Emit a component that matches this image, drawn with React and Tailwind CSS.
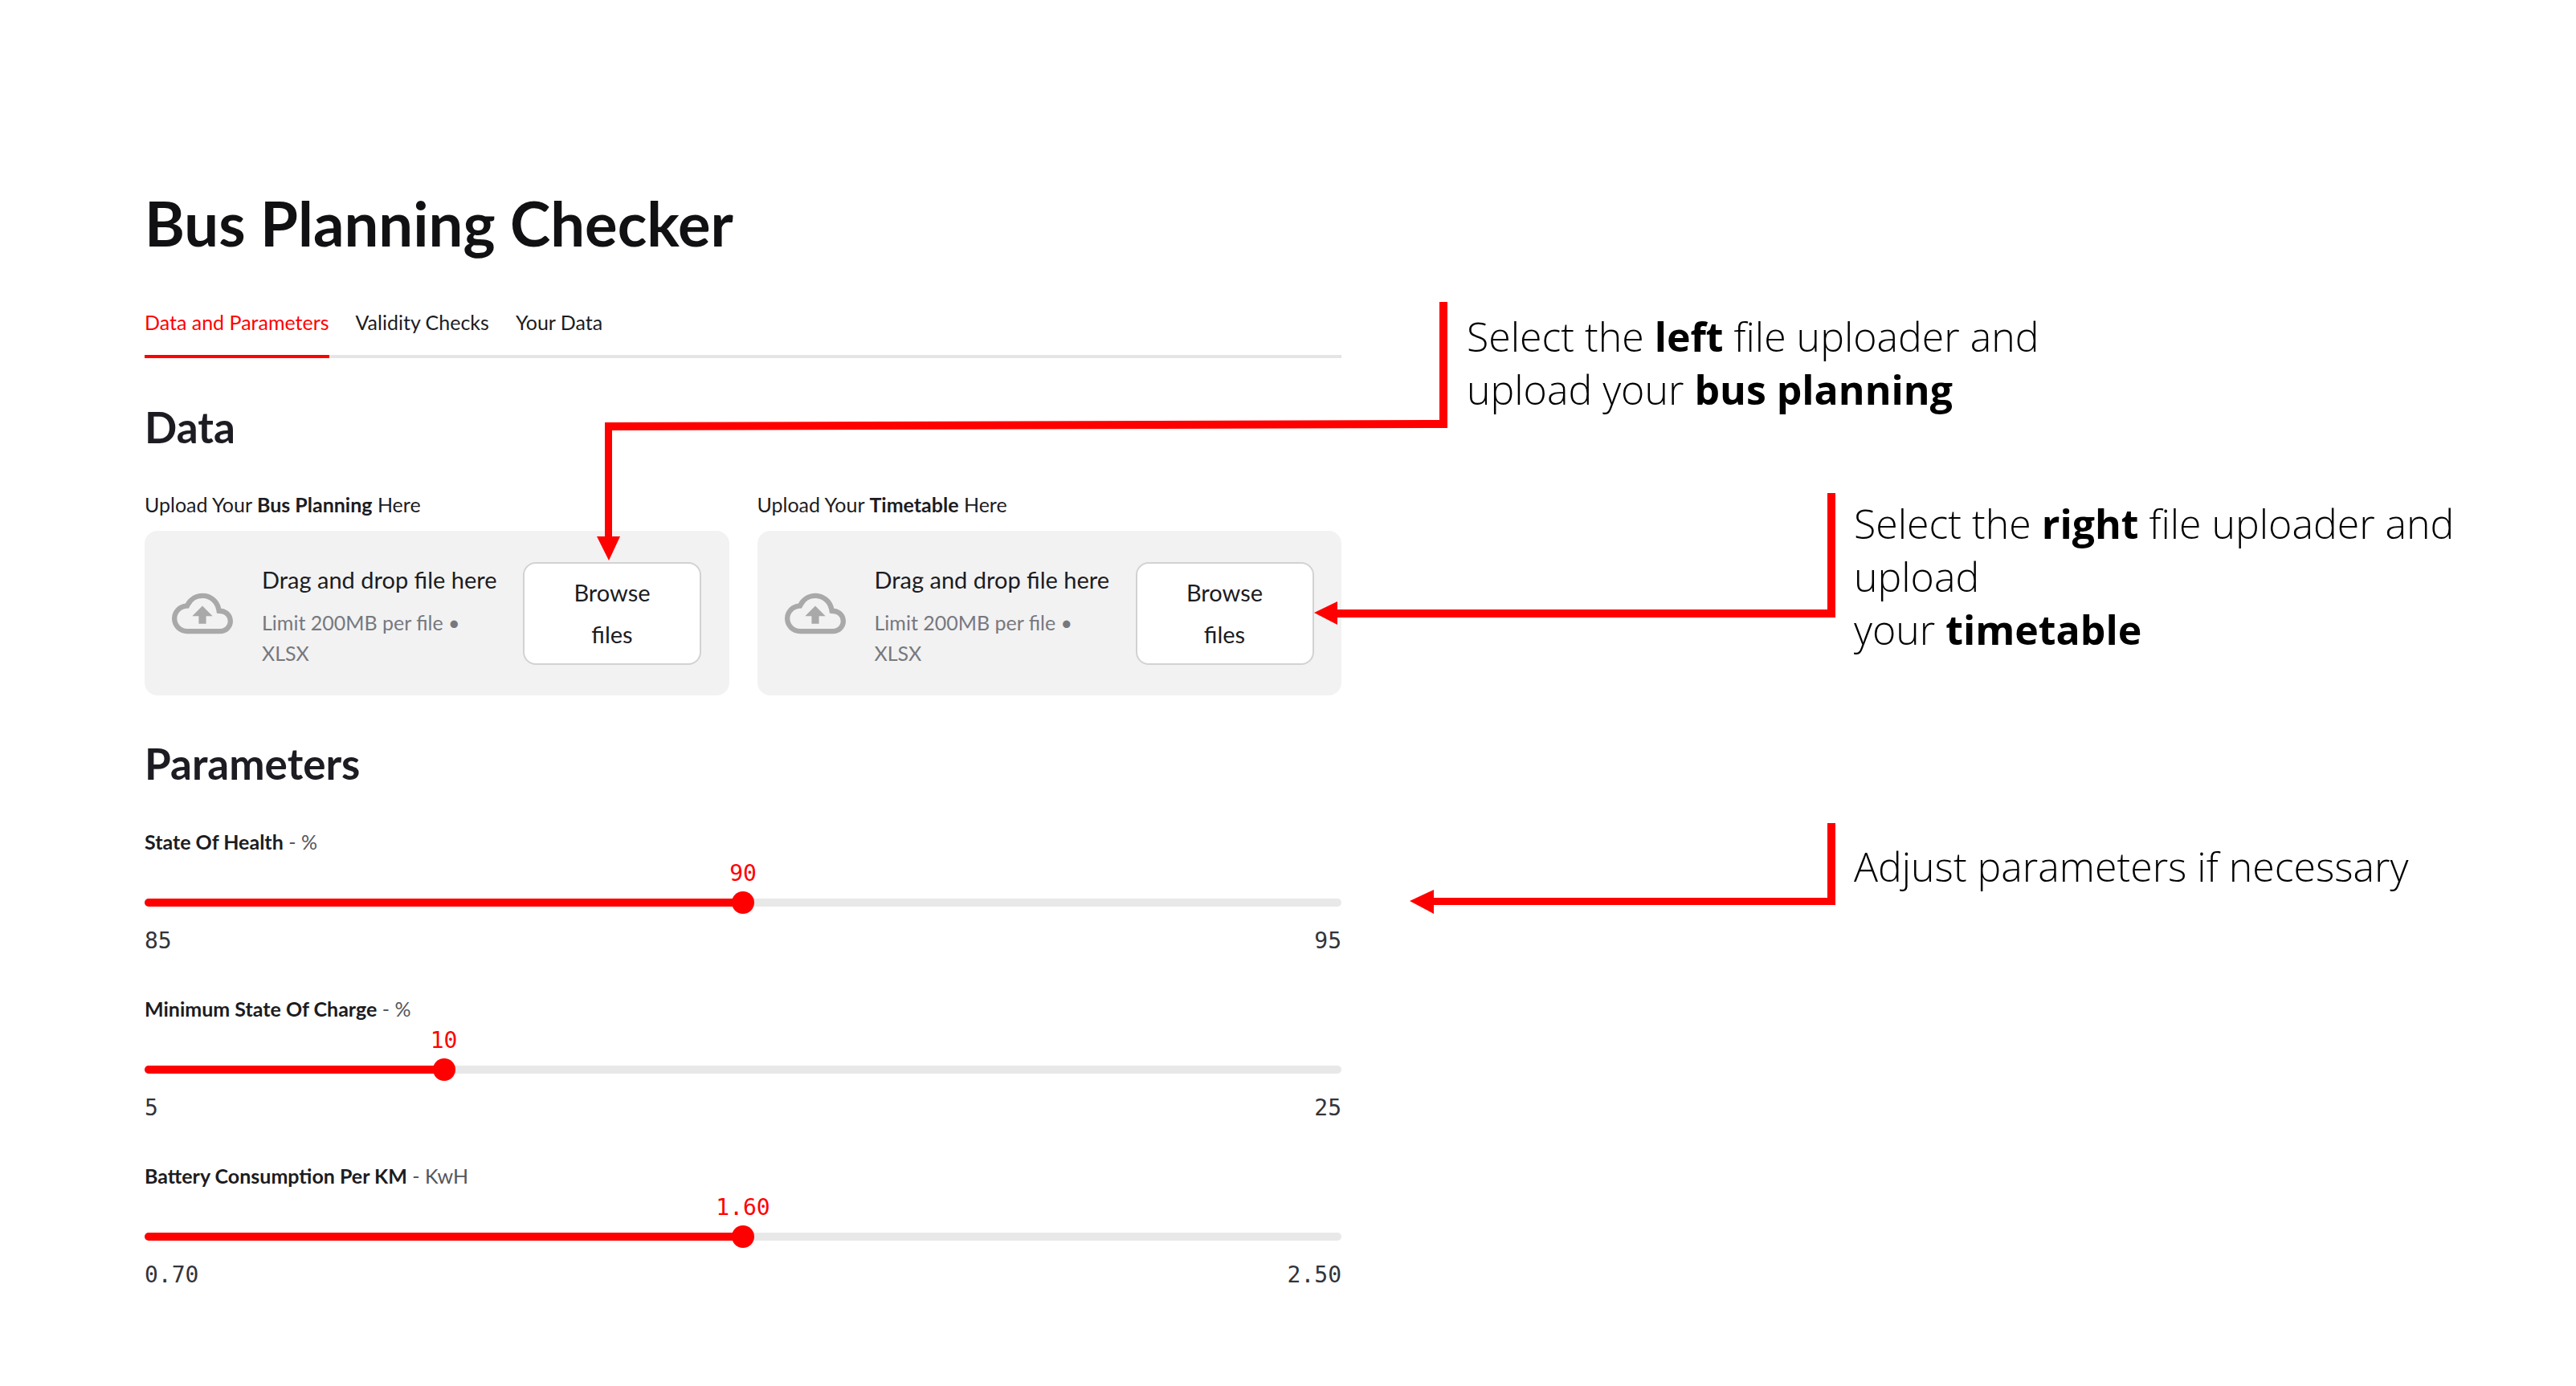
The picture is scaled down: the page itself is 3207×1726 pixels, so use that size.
import { MdOutlineCloudUpload } from "react-icons/md";

const sliders = [
  { name: "State Of Health", unit: "%", min: "85", max: "95", value: "90", pct: 50 },
  { name: "Minimum State Of Charge", unit: "%", min: "5", max: "25", value: "10", pct: 25 },
  { name: "Battery Consumption Per KM", unit: "KwH", min: "0.70", max: "2.50", value: "1.60", pct: 50 },
];

const Uploader = ({ title }) => (
  <div>
    <p className="text-[25px] leading-[34px] text-[#1c1c22]">
      Upload Your <b className="font-bold">{title}</b> Here
    </p>
    <div className="mt-[16px] h-[205px] rounded-[16px] bg-[#f2f2f2] flex items-center pl-[34px] pr-[34px]">
      <MdOutlineCloudUpload className="w-[76px] h-[76px] shrink-0 text-[#a9a9a9]" />
      <div className="ml-[36px] w-[325px] shrink-0 pt-[7px]">
        <p className="text-[29px] leading-[40px] whitespace-nowrap text-[#1c1c22]">Drag and drop file here</p>
        <p className="mt-[14px] w-[290px] text-[25px] leading-[38px] text-[#77787e]">Limit 200MB per file • XLSX</p>
      </div>
      <button className="w-[222px] h-[128px] shrink-0 rounded-[16px] border-2 border-[#d2d2d2] bg-white px-[40px] text-[29px] leading-[52px] text-[#1c1c22]">
        Browse files
      </button>
    </div>
  </div>
);

const Slider = ({ name, unit, min, max, value, pct }) => (
  <div>
    <p className="text-[25px] leading-[34px] text-[#1c1c22]">
      <b className="font-bold">{name}</b> <span className="text-[#55565c]">- {unit}</span>
    </p>
    <div className="relative mt-[54px] h-[10px] rounded-full bg-[#e8e8e8]">
      <div className="h-full rounded-full bg-[#ff0000]" style={{ width: `${pct}%` }} />
      <div className="absolute top-[-9px] w-[28px] h-[28px] -ml-[14px] rounded-full bg-[#ff0000]" style={{ left: `${pct}%` }}>
        <span className="absolute left-1/2 -translate-x-1/2 top-[-39px] font-['DejaVu_Sans_Mono',monospace] text-[28px] leading-[34px] text-[#ff0000]">
          {value}
        </span>
      </div>
    </div>
    <div className="mt-[26px] flex justify-between font-['DejaVu_Sans_Mono',monospace] text-[28px] leading-[34px] text-[#33343a]">
      <span>{min}</span>
      <span>{max}</span>
    </div>
  </div>
);

const Note = ({ className, children }) => (
  <p className={`absolute font-['Open_Sans',sans-serif] font-light text-[50px] leading-[66px] text-black ${className}`}>
    {children}
  </p>
);

export default function App() {
  return (
    <div className="relative w-[3207px] h-[1726px] overflow-hidden bg-white font-['Lato',sans-serif]">
      <main className="w-[1490px] ml-[180px] pt-[233px]">
        <h1 className="text-[76px] leading-[90px] font-bold text-[#111114]">Bus Planning Checker</h1>

        <nav className="mt-[47px] h-[76px] flex gap-[33px] border-b-4 border-[#e5e5e5]">
          <span className="h-[76px] border-b-4 border-[#ff0000] pt-[14px] text-[25px] leading-[34px] text-[#ff0000]">Data and Parameters</span>
          <span className="pt-[14px] text-[25px] leading-[34px] text-[#1c1c22]">Validity Checks</span>
          <span className="pt-[14px] text-[25px] leading-[34px] text-[#1c1c22]">Your Data</span>
        </nav>

        <h2 className="mt-[54px] text-[53px] leading-[64px] font-bold text-[#1c1c22]">Data</h2>
        <div className="mt-[47px] grid grid-cols-2 gap-[35px]">
          <Uploader title="Bus Planning" />
          <Uploader title="Timetable" />
        </div>

        <h2 className="mt-[53px] text-[53px] leading-[64px] font-bold text-[#1c1c22]">Parameters</h2>
        <div className="mt-[48px] flex flex-col gap-[50px]">
          {sliders.map((s) => (
            <Slider key={s.name} {...s} />
          ))}
        </div>
      </main>

      {/* annotations on top of the page */}
      <svg className="absolute inset-0" width="3207" height="1726" viewBox="0 0 3207 1726" fill="#ff0000">
        <polygon points="1792,376 1802,376 1802,533 762,536 762,668 772,668 758,698 743,668 753,668 753,526 1792,523" />
        <polygon points="2275,614 2285,614 2285,769 1665,769 1665,778 1636,763 1665,749 1665,759 2275,759" />
        <polygon points="2275,1025 2285,1025 2285,1127 1785,1127 1785,1138 1755,1122 1785,1108 1785,1118 2275,1118" />
      </svg>
      <Note className="left-[1826px] top-[386px] w-[800px]">
        Select the <b className="font-bold">left</b> file uploader and
        <br />
        upload your <b className="font-bold">bus planning</b>
      </Note>
      <Note className="left-[2308px] top-[619px] w-[880px]">
        Select the <b className="font-bold">right</b> file uploader and upload
        <br />
        your <b className="font-bold">timetable</b>
      </Note>
      <Note className="left-[2308px] top-[1046px] w-[880px]">Adjust parameters if necessary</Note>
    </div>
  );
}
